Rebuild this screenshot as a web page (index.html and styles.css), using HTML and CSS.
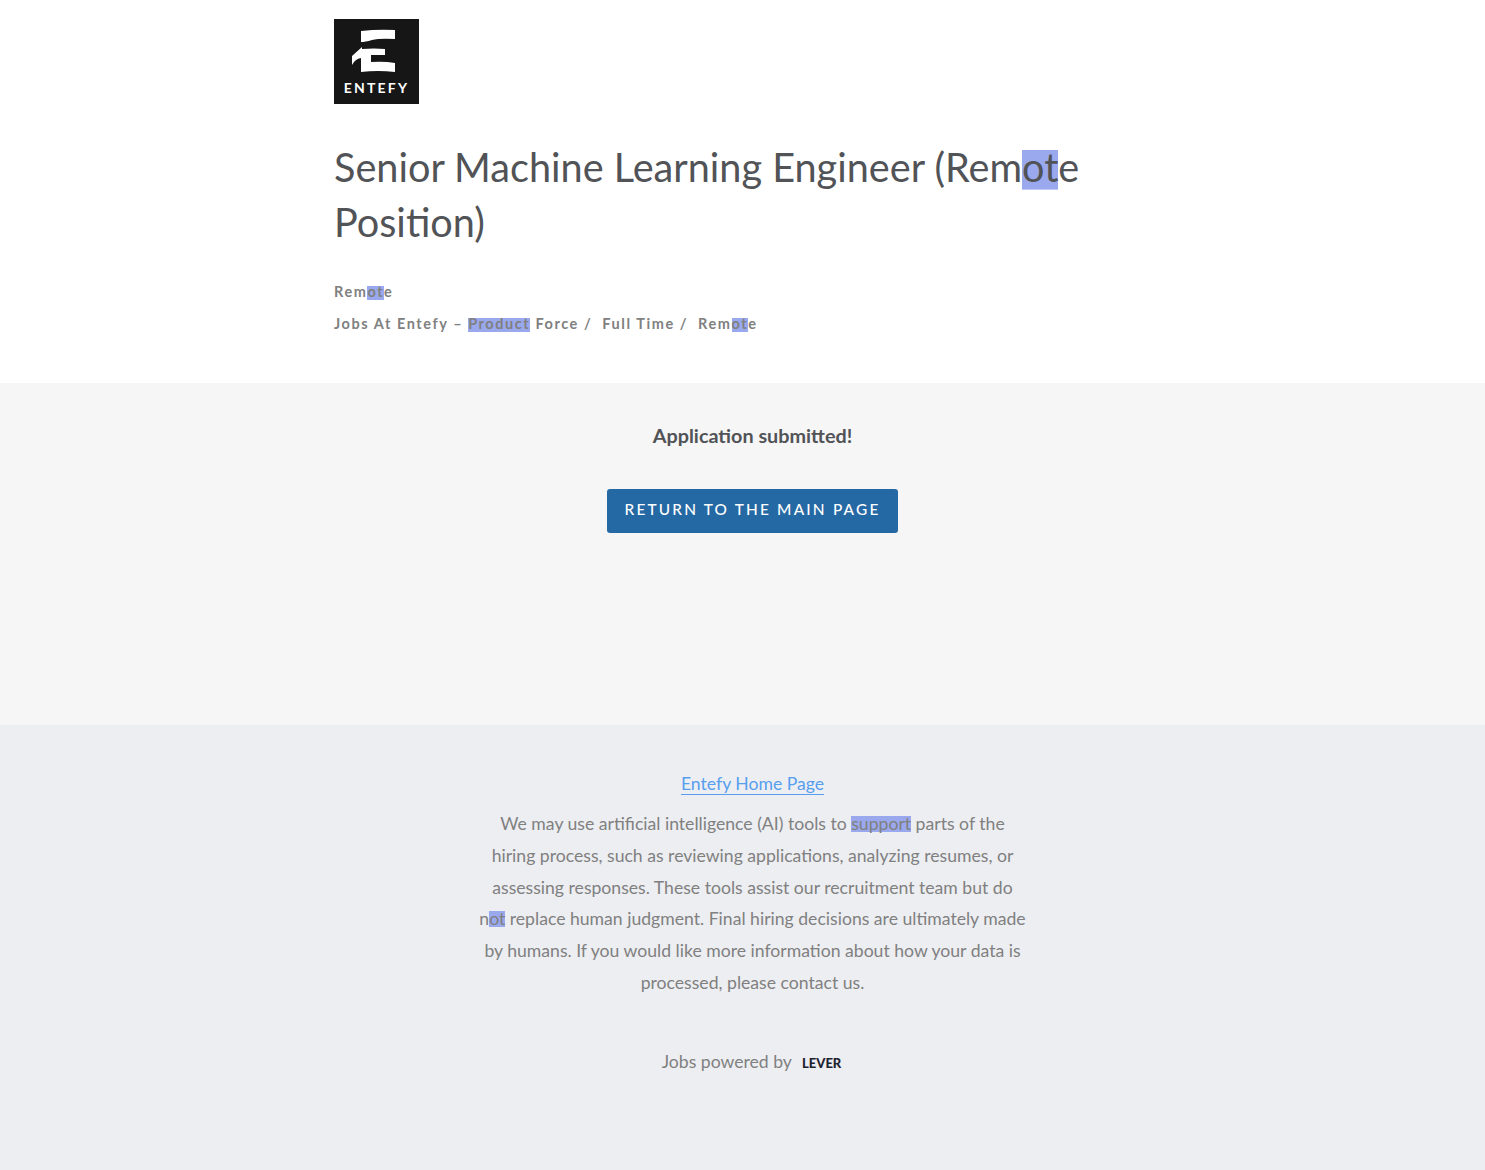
FILE: index.html
```html
<!DOCTYPE html>
<html lang="en">
<head>
    <meta charset="UTF-8">
    <title>Senior Machine Learning Engineer (Remote Position)</title>
    <link rel="stylesheet" href="styles.css">
</head>
<body>
    <header class="main-header">
        <div class="wrapper">
            <a class="logo" href="#">
                <svg width="85" height="85" viewBox="0 0 85 85">
                    <rect width="85" height="85" fill="#161616"/>
                    <path d="M27 12 Q44 10 61 11 V20 Q46 19 38 21 Q31 23 27 23 Z" fill="#fff"/>
                    <path d="M18 46 V37 L28 28 V30 Q40 29 51 30 V36 H37 V43 Q50 42 61 44 V53 Q44 51 27 53 V39 Q21 40 18 46 Z" fill="#fff"/>
                    <text x="42.5" y="74" class="logo-text">ENTEFY</text>
                </svg>
            </a>
            <div class="posting-headline">
                <h2>Senior Machine Learning Engineer (Rem<mark>ot</mark>e Position)</h2>
                <div class="location">Rem<mark>ot</mark>e</div>
                <div class="categories">
                    <span>Jobs At Entefy – <mark>Product</mark> Force /</span>
                    <span>Full Time /</span>
                    <span>Rem<mark>ot</mark>e</span>
                </div>
            </div>
        </div>
    </header>

    <section class="submitted">
        <h4>Application submitted!</h4>
        <a class="btn" href="#">Return to the main page</a>
    </section>

    <footer class="main-footer">
        <a class="home-link" href="#">Entefy Home Page</a>
        <p class="notice">We may use artificial intelligence (AI) tools to <mark>support</mark> parts of the hiring process, such as reviewing applications, analyzing resumes, or assessing responses. These tools assist our recruitment team but do n<mark>ot</mark> replace human judgment. Final hiring decisions are ultimately made by humans. If you would like more information about how your data is processed, please contact us.</p>
        <p class="powered">Jobs powered by <span class="lever">LEVER</span></p>
    </footer>
</body>
</html>
```

FILE: styles.css
```css
* {
    box-sizing: border-box;
    margin: 0;
    padding: 0;
}

body {
    background: #ffffff;
    color: #515357;
    font-family: Lato, "Open Sans", sans-serif;
}

/* highlight is only as tall as the font size, not the full line box */
mark {
    background: linear-gradient(#9aa8ee, #9aa8ee) 0 calc(50% + 0.09em) / 100% 1em no-repeat;
    color: inherit;
}

.wrapper {
    width: 836px;
    margin-left: 334px;
}

.main-header {
    height: 383px;
    padding-top: 19px;
}

.logo {
    display: block;
    width: 85px;
    height: 85px;
}

.logo svg {
    display: block;
}

.logo-text {
    fill: #ffffff;
    font-family: Lato, sans-serif;
    font-size: 14px;
    font-weight: 700;
    letter-spacing: 2.2px;
    text-anchor: middle;
}

.posting-headline {
    padding-top: 35px;
}

h2 {
    font-size: 39.63px;
    font-weight: 400;
    line-height: 55px;
    color: #515357;
    margin-bottom: 27px;
}

.location,
.categories {
    font-size: 14.5px;
    font-weight: 700;
    letter-spacing: 1.56px;
    line-height: 32px;
    color: #808080;
}

.categories {
    display: flex;
    gap: 10px;
}

.submitted {
    height: 342px;
    background: #f6f6f6;
    padding: 38px 0 0 20px;
    text-align: center;
}

.submitted h4 {
    font-size: 19.8px;
    font-weight: 700;
    line-height: 28px;
    color: #515357;
    margin-bottom: 40px;
}

.btn {
    display: inline-block;
    background: #2569a4;
    color: #ffffff;
    border-radius: 3px;
    padding: 0 18px;
    font-size: 15.4px;
    font-weight: 500;
    letter-spacing: 2.18px;
    line-height: 40px;
    height: 44px;
    text-transform: uppercase;
    text-decoration: none;
}

.main-footer {
    height: 445px;
    background: #edeef2;
    padding: 47px 0 0 20px;
    text-align: center;
    color: #808080;
    font-size: 17.62px;
}

.home-link {
    color: #579eee;
    line-height: 24px;
    text-decoration: none;
    border-bottom: 1px solid #579eee;
}

.notice {
    width: 550px;
    margin: 12px auto 0;
    line-height: 31.8px;
}

.notice mark {
    background-size: 100% 16px;
    background-position: 0 50%;
}

.powered {
    margin-top: 47px;
    line-height: 32px;
}

.lever {
    color: #1f2330;
    font-size: 13px;
    font-weight: 900;
    margin: 0 2px 0 6px;
}
```
